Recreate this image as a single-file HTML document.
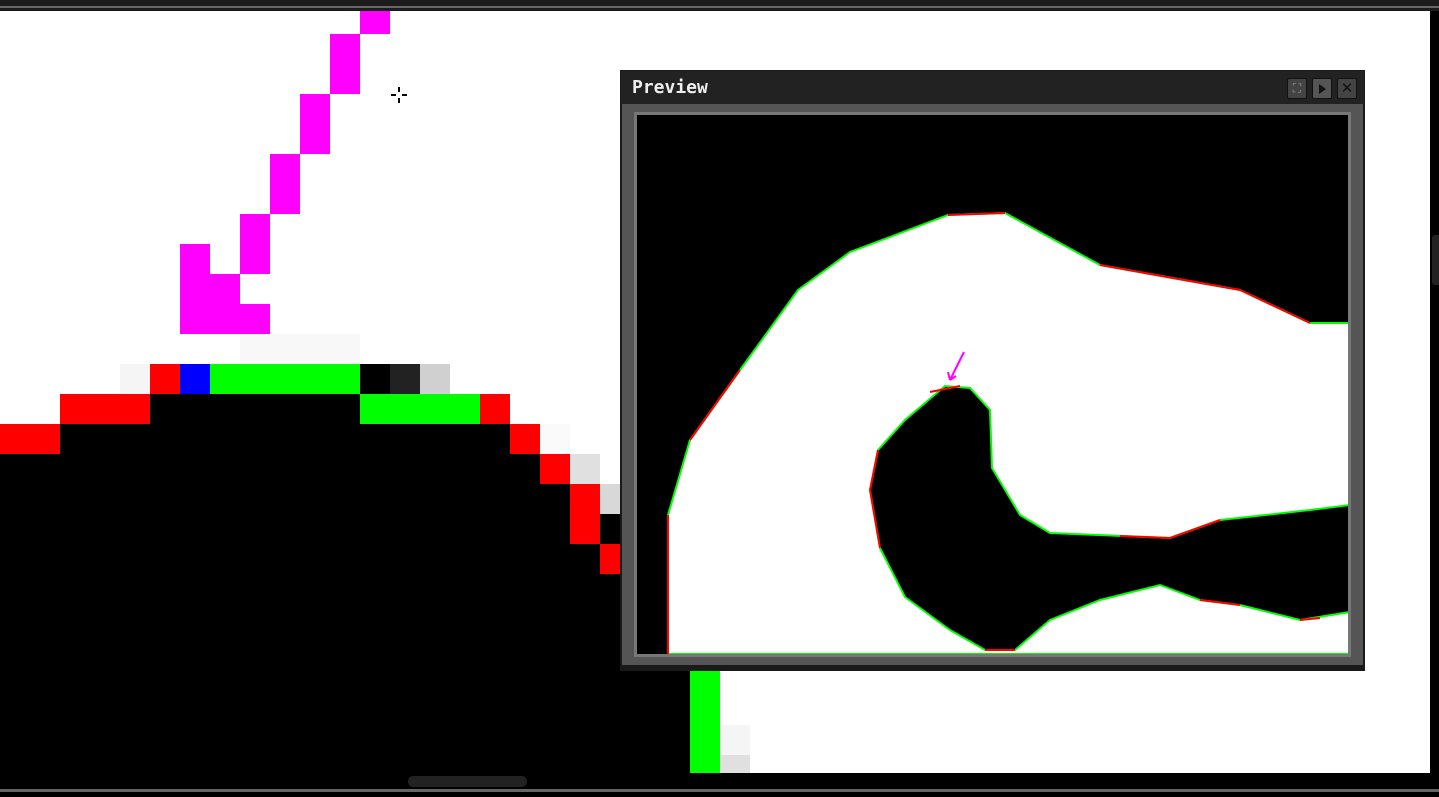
<!DOCTYPE html>
<html><head><meta charset="utf-8"><style>
html,body{margin:0;padding:0;width:1439px;height:797px;overflow:hidden;background:#000;position:relative;font-family:"Liberation Sans",sans-serif}
.a{position:absolute}
</style></head><body>
<div class="a" style="left:0;top:0;width:1439px;height:11px;background:#1c1c1c"></div>
<div class="a" style="left:0;top:6px;width:1439px;height:2px;background:#666"></div>
<div class="a" style="left:0;top:11px;width:1430px;height:762px;background:#fff;overflow:hidden">
<svg width="1430" height="762" viewBox="0 11 1430 762" style="position:absolute;left:0;top:0" shape-rendering="crispEdges">
<g fill="#f0f">
<rect x="360" y="11" width="30" height="23"/><rect x="330" y="34" width="30" height="60"/><rect x="300" y="94" width="30" height="60"/><rect x="270" y="154" width="30" height="60"/><rect x="240" y="214" width="30" height="60"/>
<rect x="180" y="244" width="30" height="90"/><rect x="210" y="274" width="30" height="60"/><rect x="240" y="304" width="30" height="30"/>
</g>
<rect x="240" y="334" width="120" height="30" fill="#f8f8f8"/>
<rect x="0" y="454" width="720" height="320" fill="#000"/>
<rect x="120" y="364" width="30" height="30" fill="#f5f5f5"/>
<rect x="150" y="364" width="30" height="30" fill="#f00"/>
<rect x="180" y="364" width="30" height="30" fill="#00f"/>
<rect x="210" y="364" width="150" height="30" fill="#0f0"/>
<rect x="360" y="364" width="30" height="30" fill="#000"/>
<rect x="390" y="364" width="30" height="30" fill="#222"/>
<rect x="420" y="364" width="30" height="30" fill="#d0d0d0"/>
<rect x="60" y="394" width="90" height="30" fill="#f00"/>
<rect x="150" y="394" width="210" height="30" fill="#000"/>
<rect x="360" y="394" width="120" height="30" fill="#0f0"/>
<rect x="480" y="394" width="30" height="30" fill="#f00"/>
<rect x="0" y="424" width="60" height="30" fill="#f00"/>
<rect x="60" y="424" width="450" height="30" fill="#000"/>
<rect x="510" y="424" width="30" height="30" fill="#f00"/>
<rect x="540" y="424" width="30" height="30" fill="#fafafa"/>
<rect x="540" y="454" width="30" height="30" fill="#f00"/>
<rect x="570" y="454" width="150" height="30" fill="#fff"/>
<rect x="570" y="454" width="30" height="30" fill="#e0e0e0"/>
<rect x="570" y="484" width="30" height="60" fill="#f00"/>
<rect x="600" y="484" width="120" height="30" fill="#fff"/>
<rect x="600" y="484" width="20" height="30" fill="#d8d8d8"/>
<rect x="600" y="544" width="20" height="30" fill="#f00"/>
<rect x="620" y="514" width="100" height="157" fill="#fff"/>
<rect x="690" y="671" width="30" height="102" fill="#0f0"/>
<rect x="720" y="671" width="30" height="102" fill="#fff"/>
<rect x="720" y="725" width="30" height="30" fill="#f5f5f5"/>
<rect x="720" y="755" width="30" height="18" fill="#e0e0e0"/>
<g stroke="#000" stroke-width="2"><line x1="399" y1="87" x2="399" y2="92"/><line x1="399" y1="98" x2="399" y2="103"/><line x1="391" y1="95" x2="396" y2="95"/><line x1="402" y1="95" x2="407" y2="95"/></g>
</svg>
</div>
<div class="a" style="left:0;top:789px;width:1439px;height:3px;background:#666"></div>
<div class="a" style="left:408px;top:776px;width:119px;height:11px;background:#222;border-radius:5px"></div>
<div class="a" style="left:1432px;top:235px;width:7px;height:50px;background:#222;border-radius:3px 0 0 3px"></div>
<div class="a" style="left:620px;top:70px;width:745px;height:601px;background:#1a1a1a"></div>
<div class="a" style="left:621px;top:71px;width:743px;height:33px;background:#222"></div>
<div class="a" style="left:632px;top:77px;font-size:18px;font-weight:bold;color:#eee;font-family:'DejaVu Sans Mono','Liberation Mono',monospace">Preview</div>
<div class="a" style="left:1287px;top:78px;width:18px;height:19px;background:#444;border:1px solid #111;border-radius:2px;color:#999;font-size:12px;text-align:center;line-height:19px">⛶</div>
<div class="a" style="left:1312px;top:78px;width:18px;height:19px;background:#555;border:1px solid #111;border-radius:2px"><div style="position:absolute;left:6px;top:5px;width:0;height:0;border-left:7px solid #111;border-top:5px solid transparent;border-bottom:5px solid transparent"></div></div>
<div class="a" style="left:1337px;top:78px;width:18px;height:19px;background:#444;border:1px solid #111;border-radius:2px;color:#111;font-size:15px;text-align:center;line-height:19px">✕</div>
<div class="a" style="left:622px;top:104px;width:741px;height:561px;background:#555"></div>
<div class="a" style="left:634px;top:112px;width:717px;height:545px;background:#777"></div>
<div class="a" style="left:637px;top:115px;width:711px;height:539px;background:#000;overflow:hidden">
<svg width="711" height="539" viewBox="637 115 711 539" style="position:absolute;left:0;top:0">
<path d="M668 654 L668 515 L690 440 L740 370 L798 290 L850 252 L948 215 L1005 213 L1100 265 L1240 290 L1310 323 L1350 323 L1350 654 Z" fill="#fff" stroke="#0f0" stroke-width="2"/>
<path d="M1350 505 L1310 510 L1220 520 L1170 538 L1050 533 L1020 515 L992 468 L990 410 L970 388 L945 386 L905 420 L878 450 L870 490 L880 548 L905 597 L950 630 L985 650 L1015 650 L1050 620 L1100 600 L1160 585 L1200 600 L1240 605 L1300 620 L1350 612 Z" fill="#000" stroke="#0f0" stroke-width="2"/>
<g stroke="#f00" stroke-width="2" fill="none">
<path d="M668 654 L668 515"/><path d="M690 440 L740 370"/><path d="M948 215 L1005 213"/><path d="M1100 265 L1240 290 L1310 323"/>
<path d="M1220 520 L1170 538 L1120 536"/><path d="M880 548 L870 490 L878 450"/><path d="M985 650 L1015 650"/><path d="M1200 600 L1240 605"/><path d="M1300 620 L1320 618"/><path d="M930 392 L960 386"/>
</g>
<path d="M964 352 L950 380 M950 380 L948 372 M950 380 L956 376" stroke="#f0f" stroke-width="2" fill="none"/>
</svg>
</div>
</body></html>
